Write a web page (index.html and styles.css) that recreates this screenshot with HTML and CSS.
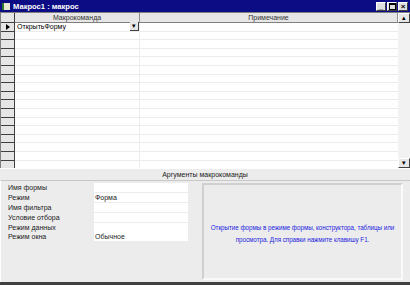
FILE: index.html
```html
<!DOCTYPE html>
<html lang="ru">
<head>
    <meta charset="UTF-8">
    <title>Макрос1 : макрос</title>
    <link rel="stylesheet" href="styles.css">
</head>
<body>
    <div class="window">
        <div class="titlebar">
            <span class="app-icon"></span>
            <span class="title">Макрос1 : макрос</span>
            <div class="win-buttons">
                <span class="win-btn">_</span>
                <span class="win-btn"><span class="max-box"></span></span>
                <span class="win-btn close">×</span>
            </div>
        </div>
        <div class="grid-area">
            <div class="selectors">
                <div class="sel-head"></div>
                <div class="sel current"><span class="arrow"></span></div>
                <div class="sel"></div><div class="sel"></div><div class="sel"></div>
                <div class="sel"></div><div class="sel"></div><div class="sel"></div>
                <div class="sel"></div><div class="sel"></div><div class="sel"></div>
                <div class="sel"></div><div class="sel"></div><div class="sel"></div>
                <div class="sel"></div><div class="sel"></div><div class="sel"></div>
                <div class="sel"></div>
            </div>
            <div class="table">
                <div class="head-row">
                    <div class="cell c1">Макрокоманда</div>
                    <div class="cell c2">Примечание</div>
                </div>
                <div class="row">
                    <div class="cell c1 combo"><span>ОткрытьФорму</span><span class="drop">▾</span></div>
                    <div class="cell c2"></div>
                </div>
                <div class="row"><div class="cell c1"></div><div class="cell c2"></div></div>
                <div class="row"><div class="cell c1"></div><div class="cell c2"></div></div>
                <div class="row"><div class="cell c1"></div><div class="cell c2"></div></div>
                <div class="row"><div class="cell c1"></div><div class="cell c2"></div></div>
                <div class="row"><div class="cell c1"></div><div class="cell c2"></div></div>
                <div class="row"><div class="cell c1"></div><div class="cell c2"></div></div>
                <div class="row"><div class="cell c1"></div><div class="cell c2"></div></div>
                <div class="row"><div class="cell c1"></div><div class="cell c2"></div></div>
                <div class="row"><div class="cell c1"></div><div class="cell c2"></div></div>
                <div class="row"><div class="cell c1"></div><div class="cell c2"></div></div>
                <div class="row"><div class="cell c1"></div><div class="cell c2"></div></div>
                <div class="row"><div class="cell c1"></div><div class="cell c2"></div></div>
                <div class="row"><div class="cell c1"></div><div class="cell c2"></div></div>
                <div class="row"><div class="cell c1"></div><div class="cell c2"></div></div>
                <div class="row"><div class="cell c1"></div><div class="cell c2"></div></div>
                <div class="row"><div class="cell c1"></div><div class="cell c2"></div></div>
            </div>
            <div class="scrollbar">
                <div class="sb-btn">▴</div>
                <div class="sb-track"></div>
                <div class="sb-btn">▾</div>
            </div>
        </div>
        <div class="args-label">Аргументы макрокоманды</div>
        <div class="args">
            <div class="fields">
                <div class="field"><span class="f-name">Имя формы</span><span class="f-val"></span></div>
                <div class="field"><span class="f-name">Режим</span><span class="f-val">Форма</span></div>
                <div class="field"><span class="f-name">Имя фильтра</span><span class="f-val"></span></div>
                <div class="field"><span class="f-name">Условие отбора</span><span class="f-val"></span></div>
                <div class="field"><span class="f-name">Режим данных</span><span class="f-val"></span></div>
                <div class="field"><span class="f-name">Режим окна</span><span class="f-val">Обычное</span></div>
            </div>
            <div class="help">Открытие формы в режиме формы, конструктора, таблицы или просмотра. Для справки нажмите клавишу F1.</div>
        </div>
    </div>
</body>
</html>
```

FILE: styles.css
```css
body {
    margin: 0;
    font-family: 'Liberation Sans', Arial, sans-serif;
    font-size: 7px;
    background-color: #fff;
}
.window {
    width: 410px;
    height: 285px;
    box-sizing: border-box;
    background-color: #ececec;
    border-bottom: 3px solid #404040;
    display: flex;
    flex-direction: column;
}
.titlebar {
    height: 12px;
    background-color: #0c0c84;
    color: #fff;
    display: flex;
    align-items: center;
    padding: 0 2px;
    gap: 3px;
}
.app-icon {
    width: 6px;
    height: 7px;
    background-color: #e8e8d0;
    border-left: 2px solid #2a7a2a;
}
.title {
    font-weight: bold;
    font-size: 7.6px;
    flex: 1;
}
.win-buttons {
    display: flex;
    gap: 1px;
}
.win-btn {
    width: 10px;
    height: 9px;
    background-color: #e0e0e0;
    color: #000;
    border: 1px solid #fff;
    border-right-color: #404040;
    border-bottom-color: #404040;
    box-sizing: border-box;
    font-size: 8px;
    line-height: 7px;
    text-align: center;
    font-weight: bold;
    display: flex;
    align-items: center;
    justify-content: center;
}
.max-box {
    width: 5px;
    height: 4px;
    border: 1px solid #000;
    border-top-width: 2px;
}
.grid-area {
    display: flex;
    height: 155px;
    background-color: #fff;
    border-left: 1px solid #808080;
    border-top: 1px solid #808080;
}
.selectors {
    width: 13px;
    background-color: #e6e6e6;
    border-right: 1px solid #404040;
}
.sel-head {
    height: 9px;
    border-bottom: 1px solid #404040;
}
.sel {
    height: 7.6px;
    border-bottom: 1px solid #404040;
    display: flex;
    align-items: center;
    justify-content: center;
}
.arrow {
    width: 0;
    height: 0;
    border-left: 4px solid #000;
    border-top: 3.5px solid transparent;
    border-bottom: 3.5px solid transparent;
}
.table {
    flex: 1;
    overflow: hidden;
}
.head-row {
    display: flex;
    height: 9px;
    background-color: #e6e6e6;
    border-bottom: 1px solid #808080;
    line-height: 9px;
    color: #333;
}
.head-row .cell {
    text-align: center;
    border-right: 1px solid #909090;
}
.row {
    display: flex;
    height: 7.6px;
    border-bottom: 1px solid #ececec;
}
.cell {
    box-sizing: border-box;
}
.c1 {
    width: 125px;
    border-right: 1px solid #ececec;
}
.c2 {
    flex: 1;
}
.combo {
    display: flex;
    justify-content: space-between;
    align-items: center;
    padding-left: 2px;
    line-height: 8px;
}
.drop {
    width: 8px;
    height: 8px;
    background-color: #e6e6e6;
    border-right: 1px solid #404040;
    border-bottom: 1px solid #404040;
    font-size: 7px;
    text-align: center;
    line-height: 8px;
}
.scrollbar {
    width: 12px;
    background-color: #f2f2f2;
    display: flex;
    flex-direction: column;
}
.sb-btn {
    height: 10px;
    background-color: #e6e6e6;
    border: 1px solid #fff;
    border-right-color: #404040;
    border-bottom-color: #404040;
    box-sizing: border-box;
    font-size: 7px;
    text-align: center;
    line-height: 8px;
}
.sb-track {
    flex: 1;
}
.args-label {
    height: 11px;
    line-height: 11px;
    text-align: center;
    border-top: 1px solid #fff;
    color: #222;
}
.args {
    flex: 1;
    display: flex;
    border-top: 1px solid #c8c8c8;
    border-left: 1px solid #fff;
    padding: 2px 7px 2px 7px;
    gap: 14px;
}
.fields {
    width: 180px;
    padding-top: 0;
}
.field {
    display: flex;
    height: 9.8px;
    align-items: center;
}
.f-name {
    width: 86px;
    color: #222;
}
.f-val {
    flex: 1;
    height: 9px;
    line-height: 9px;
    background-color: #fff;
    padding-left: 1px;
    color: #222;
}
.help {
    flex: 1;
    border: 2px solid #d0d0d0;
    border-right-color: #fafafa;
    border-bottom-color: #fafafa;
    color: #1e1ee0;
    text-align: center;
    display: flex;
    align-items: center;
    justify-content: center;
    font-size: 6.3px;
    letter-spacing: -0.05px;
    line-height: 11.5px;
    padding: 4px 0 0 0;
}
```
